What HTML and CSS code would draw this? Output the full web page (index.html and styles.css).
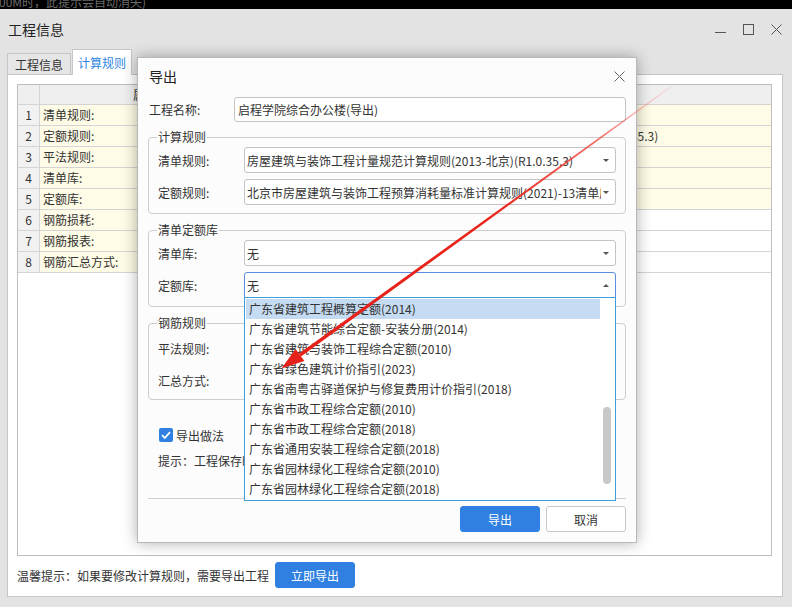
FILE: index.html
```html
<!DOCTYPE html>
<html lang="zh-CN">
<head>
<meta charset="utf-8">
<title>工程信息</title>
<link rel="stylesheet" href="styles.css">
</head>
<body>
<div class="notice"><span>00M时，此提示会自动消失)</span></div>

<div class="window">
  <header class="titlebar">
    <h1 class="title">工程信息</h1>
    <div class="controls">
      <svg viewBox="0 0 11 11"><path d="M0 8.5H11" stroke="#555" fill="none"/></svg>
      <svg viewBox="0 0 11 11"><rect x="0.5" y="0.5" width="10" height="10" stroke="#555" fill="none"/></svg>
      <svg viewBox="0 0 11 11"><path d="M0.5 0.5L10.5 10.5M10.5 0.5L0.5 10.5" stroke="#555" fill="none"/></svg>
    </div>
  </header>

  <nav class="tabs">
    <span class="tab">工程信息</span>
    <span class="tab active">计算规则</span>
  </nav>

  <section class="panel">
    <div class="grid">
      <div class="row head"><span class="c-no"></span><span class="c-name">属性名称</span><span class="c-val">属性值</span></div>
      <div class="row req"><span class="c-no">1</span><span class="c-name">清单规则:</span><span class="c-val">房屋建筑与装饰工程计量规范计算规则(2013-北京)(R1.0.35.3)</span></div>
      <div class="row req"><span class="c-no">2</span><span class="c-name">定额规则:</span><span class="c-val">北京市房屋建筑与装饰工程预算消耗量标准计算规则(2021)-13清单(R1.0.35.3)</span></div>
      <div class="row req"><span class="c-no">3</span><span class="c-name">平法规则:</span><span class="c-val">22系平法规则</span></div>
      <div class="row req"><span class="c-no">4</span><span class="c-name">清单库:</span><span class="c-val"></span></div>
      <div class="row req"><span class="c-no">5</span><span class="c-name">定额库:</span><span class="c-val"></span></div>
      <div class="row"><span class="c-no">6</span><span class="c-name">钢筋损耗:</span><span class="c-val">不计算损耗</span></div>
      <div class="row"><span class="c-no">7</span><span class="c-name">钢筋报表:</span><span class="c-val">北京(2021)</span></div>
      <div class="row"><span class="c-no">8</span><span class="c-name">钢筋汇总方式:</span><span class="c-val">按照钢筋图示尺寸-即外皮汇总</span></div>
    </div>
    <div class="footer">
      <span>温馨提示：如果要修改计算规则，需要导出工程</span>
      <button class="btn primary">立即导出</button>
    </div>
  </section>
</div>

<div class="dialog">
  <div class="dlg-head">
    <h2 class="dlg-title">导出</h2>
    <svg class="dlg-close" viewBox="0 0 11 11"><path d="M0.5 0.5L10.5 10.5M10.5 0.5L0.5 10.5" stroke="#666" fill="none"/></svg>
  </div>

  <div class="field-line">
    <label>工程名称:</label>
    <div class="input">启程学院综合办公楼(导出)</div>
  </div>

  <fieldset class="group">
    <legend>计算规则</legend>
    <div class="field">
      <label>清单规则:</label>
      <div class="combo"><span class="val">房屋建筑与装饰工程计量规范计算规则(2013-北京)(R1.0.35.3)</span><i class="caret"></i></div>
    </div>
    <div class="field">
      <label>定额规则:</label>
      <div class="combo"><span class="val">北京市房屋建筑与装饰工程预算消耗量标准计算规则(2021)-13清单库(R1.0.35.3)</span><i class="caret"></i></div>
    </div>
  </fieldset>

  <fieldset class="group">
    <legend>清单定额库</legend>
    <div class="field">
      <label>清单库:</label>
      <div class="combo"><span class="val">无</span><i class="caret"></i></div>
    </div>
    <div class="field">
      <label>定额库:</label>
      <div class="combo open"><span class="val">无</span><i class="caret up"></i>
        <div class="dropdown">
          <ul class="list">
            <li class="sel">广东省建筑工程概算定额(2014)</li>
            <li>广东省建筑节能综合定额-安装分册(2014)</li>
            <li>广东省建筑与装饰工程综合定额(2010)</li>
            <li>广东省绿色建筑计价指引(2023)</li>
            <li>广东省南粤古驿道保护与修复费用计价指引(2018)</li>
            <li>广东省市政工程综合定额(2010)</li>
            <li>广东省市政工程综合定额(2018)</li>
            <li>广东省通用安装工程综合定额(2018)</li>
            <li>广东省园林绿化工程综合定额(2010)</li>
            <li>广东省园林绿化工程综合定额(2018)</li>
          </ul>
          <div class="scroll"><div class="thumb"></div></div>
        </div>
      </div>
    </div>
  </fieldset>

  <fieldset class="group rebar">
    <legend>钢筋规则</legend>
    <div class="field">
      <label>平法规则:</label>
      <div class="combo"><span class="val">22系平法规则</span><i class="caret"></i></div>
    </div>
    <div class="field">
      <label>汇总方式:</label>
      <div class="combo"><span class="val">按照钢筋图示尺寸-即外皮汇总</span><i class="caret"></i></div>
    </div>
  </fieldset>

  <div class="check">
    <span class="box"><svg viewBox="0 0 14 14"><path d="M3 7.2L5.8 10L11 4.2" stroke="#fff" stroke-width="1.8" fill="none"/></svg></span>
    <span>导出做法</span>
  </div>
  <div class="hint">提示：工程保存时会同时导出做法信息</div>

  <div class="sep"></div>
  <div class="actions">
    <button class="btn primary">导出</button>
    <button class="btn">取消</button>
  </div>
</div>

<svg class="arrow" viewBox="0 0 792 607">
  <defs>
    <linearGradient id="fade" gradientUnits="userSpaceOnUse" x1="672" y1="86" x2="300" y2="355">
      <stop offset="0" stop-color="#ff6060" stop-opacity="0.1"/>
      <stop offset="0.2" stop-color="#f03a30" stop-opacity="0.75"/>
      <stop offset="0.5" stop-color="#e8231a" stop-opacity="1"/>
      <stop offset="1" stop-color="#e5211a" stop-opacity="1"/>
    </linearGradient>
  </defs>
  <polygon points="671.7,85.6 672.3,86.4 301,356.6 299,353.4" fill="url(#fade)"/>
  <polygon points="281.4,368.5 304.4,360.9 295.6,349.1" fill="#e5211a"/>
</svg>
</body>
</html>
```

FILE: styles.css
```css
* { box-sizing: border-box; }

html, body { margin: 0; padding: 0; }

body {
  width: 792px;
  height: 607px;
  overflow: hidden;
  position: relative;
  background: #e3e3e3;
  font-family: "Noto Sans CJK SC", "Noto Sans", sans-serif;
  font-size: 12px;
  color: #333;
}

/* top notice strip */
.notice { height: 9px; background: #000; overflow: hidden; }
.notice span {
  display: block;
  margin-top: -4px;
  margin-left: -1px;
  line-height: 12px;
  color: #6b6b6b;
  white-space: nowrap;
}

/* window title bar */
.titlebar {
  height: 40px;
  display: flex;
  align-items: center;
  justify-content: space-between;
  padding: 0 10px 0 8px;
}
.title { margin: 0; font-size: 14px; font-weight: normal; color: #222; line-height: 20px; }
.controls { display: flex; gap: 17px; }
.controls svg { display: block; width: 11px; height: 11px; }

/* tabs */
.tabs { height: 25px; display: flex; align-items: flex-end; gap: 1px; padding-left: 7px; }
.tab {
  height: 21px;
  width: 64px;
  border: 1px solid #c6c6c6;
  border-bottom: none;
  background: #e6e6e6;
  display: flex;
  align-items: center;
  justify-content: center;
  color: #333;
}
.tab.active {
  height: 26px;
  width: 60px;
  background: #fff;
  color: #2f86e0;
  margin-bottom: -1px;
  position: relative;
  z-index: 1;
}

/* tab panel */
.panel {
  margin-left: 7px;
  width: 776px;
  height: 523px;
  background: #fff;
  border: 1px solid #c6c6c6;
  padding: 9px 10px 8px 9px;
  display: flex;
  flex-direction: column;
}

.grid { flex: 1; border: 1px solid #bdbdbd; background: #fff; }
.row {
  display: grid;
  grid-template-columns: 22px 204px 1fr;
  height: 21px;
  border-bottom: 1px solid #d4d4d4;
}
.row.head { height: 20px; }
.row > span {
  border-right: 1px solid #d4d4d4;
  line-height: 20px;
  padding-left: 3px;
  white-space: nowrap;
  overflow: hidden;
}
.row > span:last-child { border-right: none; }
.row .c-no { text-align: center; background: #f1f1f1; padding-left: 0; }
.row .c-name { background: #fefbe6; }
.row.req .c-val { background: #fefbe6; }
.row.head > span { background: #efefef; text-align: left; padding-left: 0; }
.row.head > .c-name { padding-left: 93px; }

.footer { margin-top: 6px; display: flex; align-items: center; gap: 6px; }

.btn {
  height: 26px;
  width: 80px;
  padding: 0;
  border: 1px solid #c8c8c8;
  border-radius: 3px;
  background: #fff;
  color: #333;
  font-family: inherit;
  font-size: 12px;
}
.btn.primary { background: #2f80e0; border-color: #2f80e0; color: #fff; }

/* export dialog */
.dialog {
  position: absolute;
  left: 137px;
  top: 57px;
  width: 500px;
  height: 486px;
  border: 1px solid #b8b8b8;
  background: #fcfcfc;
  box-shadow: 0 0 14px rgba(0, 0, 0, 0.32);
  padding: 0 10px;
  display: flex;
  flex-direction: column;
  z-index: 2;
}
.dlg-head {
  height: 36px;
  display: flex;
  align-items: center;
  justify-content: space-between;
  padding: 0 1px;
}
.dlg-title { margin: 0; font-size: 14px; font-weight: normal; color: #222; line-height: 20px; }
.dlg-close { display: block; width: 11px; height: 11px; }

.field-line { display: flex; align-items: center; height: 25px; margin-top: 3px; }
.field-line label { width: 86px; padding-left: 1px; }
.input {
  flex: 1;
  height: 25px;
  border: 1px solid #c4c4c4;
  border-radius: 3px;
  background: #fff;
  padding-left: 3px;
  line-height: 23px;
  color: #333;
}

.group {
  margin: 9px 0 0;
  padding: 3px 9px 8px 0;
  border: 1px solid #cdcdcd;
  border-radius: 4px;
  min-width: 0;
}
.field-line + .group { margin-top: 8px; }
.group.rebar { padding-top: 5px; padding-bottom: 6px; }
.group legend {
  margin-left: 8px;
  padding: 0 1px;
  line-height: 14px;
  font-size: 12px;
  color: #333;
}

.field { display: flex; align-items: center; }
.field + .field { margin-top: 6px; }
.field > label { width: 95px; padding-left: 9px; flex: none; }

.combo {
  flex: 1;
  min-width: 0;
  height: 26px;
  border: 1px solid #c4c4c4;
  border-radius: 3px;
  background: #fff;
  display: flex;
  align-items: center;
  padding: 0 6px 0 2px;
  position: relative;
}
.combo.open { border-color: #5b8de0; border-radius: 3px 3px 0 0; }
.combo .val { flex: 1; min-width: 0; overflow: hidden; white-space: nowrap; color: #333; }
.caret {
  flex: none;
  margin-left: 2px;
  width: 0;
  height: 0;
  border-left: 3px solid transparent;
  border-right: 3px solid transparent;
  border-top: 3px solid #555;
}
.caret.up { border-top: none; border-bottom: 3px solid #555; }

.dropdown {
  position: absolute;
  top: 100%;
  left: -1px;
  right: -1px;
  height: 204px;
  padding: 1px 0;
  border: 1px solid #3ba0d9;
  background: #fff;
  display: flex;
  z-index: 3;
}
.list { flex: 1; list-style: none; margin: 0; padding: 0 0 0 1px; }
.list li { height: 20px; line-height: 20px; padding-left: 3px; white-space: nowrap; color: #333; }
.list li.sel { background: #c4dbf1; }
.scroll { width: 15px; flex: none; padding: 108px 4px 0 3px; }
.thumb { height: 77px; border-radius: 4px; background: #c8c8c8; }

.check { margin-top: 25px; height: 20px; display: flex; align-items: center; gap: 3px; padding-left: 11px; }
.box { width: 14px; height: 14px; border-radius: 2px; background: #2f80e0; display: flex; }
.box svg { width: 14px; height: 14px; display: block; }
.hint { margin-top: 6px; line-height: 20px; padding-left: 10px; white-space: nowrap; }
.sep { margin-top: 27px; border-top: 1px solid #cfcfcf; }
.actions { margin-top: 7px; display: flex; justify-content: flex-end; gap: 6px; }

/* annotation arrow */
.arrow {
  position: absolute;
  left: 0;
  top: 0;
  width: 792px;
  height: 607px;
  z-index: 10;
  pointer-events: none;
}
```
